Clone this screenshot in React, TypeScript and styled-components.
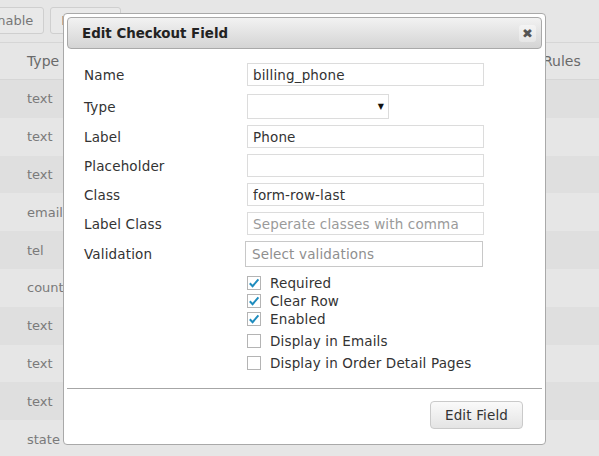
import React from "react";
import styled, { createGlobalStyle } from "styled-components";

const GlobalStyle = createGlobalStyle`
  html, body {
    margin: 0;
    padding: 0;
    background: #e6e6e6;
  }
  body {
    font-family: "DejaVu Sans", Verdana, sans-serif;
    font-size: 13px;
    color: #333;
  }
`;

const tableRows = [
  "text",
  "text",
  "text",
  "email",
  "tel",
  "country",
  "text",
  "text",
  "text",
  "state",
];

const formRows = [
  { label: "Name", kind: "input", value: "billing_phone" },
  { label: "Type", kind: "select" },
  { label: "Label", kind: "input", value: "Phone" },
  { label: "Placeholder", kind: "input", value: "" },
  { label: "Class", kind: "input", value: "form-row-last" },
  { label: "Label Class", kind: "input", value: "", placeholder: "Seperate classes with comma" },
  { label: "Validation", kind: "multi", placeholder: "Select validations" },
];

const flags = ["Required", "Clear Row", "Enabled"];
const displayOptions = ["Display in Emails", "Display in Order Detail Pages"];

const CheckMark = () => (
  <svg width="12" height="12" viewBox="0 0 12 12">
    <path d="M1.8 6.2 L4.6 9.2 L10.4 2.4" fill="none" stroke="#1e8cbe" strokeWidth="2" />
  </svg>
);

const App = () => {
  return (
    <Page>
      <GlobalStyle />
      <Toolbar>
        <GhostButton>Enable</GhostButton>
        <GhostButton>Disable</GhostButton>
      </Toolbar>
      <Table>
        <HeadRow>
          <span>Type</span>
          <span>Label</span>
          <span>Rules</span>
        </HeadRow>
        {tableRows.map((type, i) => (
          <BodyRow key={i} $dark={i % 2 === 0}>
            <span>{type}</span>
          </BodyRow>
        ))}
      </Table>

      <Modal>
        <TitleBar>
          <Title>Edit Checkout Field</Title>
          <CloseButton>✖</CloseButton>
        </TitleBar>
        <FormBody>
          <Fields>
            {formRows.map((f) => (
              <FieldRow key={f.label} $first={f.kind === "select"}>
                <FieldLabel>{f.label}</FieldLabel>
                {f.kind === "input" && (
                  <TextInput readOnly value={f.value} placeholder={f.placeholder} />
                )}
                {f.kind === "select" && (
                  <SelectBox>
                    <Arrow>▼</Arrow>
                  </SelectBox>
                )}
                {f.kind === "multi" && <MultiBox>{f.placeholder}</MultiBox>}
              </FieldRow>
            ))}
          </Fields>
          <Checks>
            <CheckGroup>
              {flags.map((label) => (
                <CheckRow key={label} $tall={false}>
                  <Box>
                    <CheckMark />
                  </Box>
                  <span>{label}</span>
                </CheckRow>
              ))}
            </CheckGroup>
            <CheckGroup>
              {displayOptions.map((label) => (
                <CheckRow key={label} $tall>
                  <Box />
                  <span>{label}</span>
                </CheckRow>
              ))}
            </CheckGroup>
          </Checks>
        </FormBody>
        <Footer>
          <PrimaryButton>Edit Field</PrimaryButton>
        </Footer>
      </Modal>
    </Page>
  );
};

const Page = styled.div`
  position: relative;
  width: 599px;
  height: 456px;
  overflow: hidden;
  background: #e6e6e6;
`;

const Toolbar = styled.div`
  display: flex;
  gap: 6px;
  margin-left: -22px;
  padding-top: 7px;
  height: 36px;
  box-sizing: border-box;
`;

const GhostButton = styled.div`
  height: 27px;
  box-sizing: border-box;
  padding: 0 10px;
  display: flex;
  align-items: center;
  border: 1px solid #cfcfcf;
  border-radius: 3px;
  background: #e9e9e9;
  color: #777;
  font-size: 13px;
`;

const Table = styled.div`
  margin-top: 6px;
  border-top: 1px solid #d6d6d6;
`;

const rowGrid = `
  display: grid;
  grid-template-columns: 100px 416px 1fr;
  align-items: center;
  padding-left: 27px;
  box-sizing: border-box;
`;

const HeadRow = styled.div`
  ${rowGrid};
  height: 37px;
  color: #6a6a6a;
  font-size: 14px;
  border-bottom: 1px solid #d6d6d6;
`;

const BodyRow = styled.div<{ $dark: boolean }>`
  ${rowGrid};
  height: 37.8px;
  color: #7a7a7a;
  font-size: 13px;
  background: ${(p) => (p.$dark ? "#dfdfdf" : "#e6e6e6")};
`;

const Modal = styled.div`
  position: absolute;
  left: 63px;
  top: 13px;
  width: 483px;
  height: 432px;
  box-sizing: border-box;
  padding: 3px;
  background: #fff;
  border: 1px solid #a9a9a9;
  border-radius: 4px;
  display: flex;
  flex-direction: column;
  font-size: 13.5px;
  letter-spacing: 0.15px;
`;

const TitleBar = styled.div`
  height: 32px;
  flex: none;
  box-sizing: border-box;
  display: flex;
  align-items: center;
  justify-content: space-between;
  padding: 0 5px 0 14px;
  border: 1px solid #a9a9a9;
  border-radius: 4px;
  background: linear-gradient(#f2f2f2, #d4d4d4);
`;

const Title = styled.div`
  font-weight: bold;
  font-size: 13.4px;
  letter-spacing: 0;
  color: #222;
`;

const CloseButton = styled.div`
  width: 17px;
  height: 17px;
  display: flex;
  align-items: center;
  justify-content: center;
  background: linear-gradient(#f4f4f4, #e6e6e6);
  border-radius: 3px;
  color: #555;
  font-size: 13px;
`;

const FormBody = styled.div`
  flex: 1;
  padding: 14px 0 0 17px;
  border-bottom: 1px solid #a6a6a6;
`;

const Fields = styled.div`
  display: flex;
  flex-direction: column;
  gap: 6px;
`;

const FieldRow = styled.div<{ $first: boolean }>`
  display: flex;
  align-items: center;
  margin-top: ${(p) => (p.$first ? "2px" : "0")};
`;

const FieldLabel = styled.div`
  width: 163px;
  flex: none;
  color: #333;
`;

const TextInput = styled.input`
  width: 237px;
  height: 23px;
  box-sizing: border-box;
  border: 1px solid #dcdcdc;
  padding: 0 5px;
  font-family: "DejaVu Sans", Verdana, sans-serif;
  font-size: 13.5px;
  letter-spacing: 0.15px;
  color: #333;
  outline: none;
  &::placeholder {
    color: #9a9a9a;
  }
`;

const SelectBox = styled.div`
  width: 142px;
  height: 25px;
  box-sizing: border-box;
  border: 1px solid #dcdcdc;
  display: flex;
  align-items: center;
  justify-content: flex-end;
  padding-right: 4px;
`;

const Arrow = styled.span`
  font-size: 8px;
  color: #111;
`;

const MultiBox = styled.div`
  width: 238px;
  height: 26px;
  margin-left: -2px;
  box-sizing: border-box;
  border: 1px solid #c8c8c8;
  padding: 0 6px;
  display: flex;
  align-items: center;
  color: #8f8f8f;
`;

const Checks = styled.div`
  margin: 7px 0 0 163px;
  display: flex;
  flex-direction: column;
  gap: 2px;
`;

const CheckGroup = styled.div`
  display: flex;
  flex-direction: column;
`;

const CheckRow = styled.div<{ $tall: boolean }>`
  display: flex;
  align-items: center;
  gap: 9px;
  height: ${(p) => (p.$tall ? "22px" : "18px")};
  color: #333;
`;

const Box = styled.div`
  width: 14px;
  height: 14px;
  box-sizing: border-box;
  border: 1px solid #b4b4b4;
  background: #fff;
  display: flex;
  align-items: center;
  justify-content: center;
`;

const Footer = styled.div`
  height: 52px;
  flex: none;
  display: flex;
  align-items: flex-start;
  justify-content: flex-end;
  padding: 12px 19px 0 0;
  box-sizing: border-box;
`;

const PrimaryButton = styled.div`
  width: 93px;
  height: 28px;
  box-sizing: border-box;
  border: 1px solid #cacaca;
  border-radius: 4px;
  background: linear-gradient(#fafafa, #e4e4e4);
  display: flex;
  align-items: center;
  justify-content: center;
  color: #333;
`;

export default App;
